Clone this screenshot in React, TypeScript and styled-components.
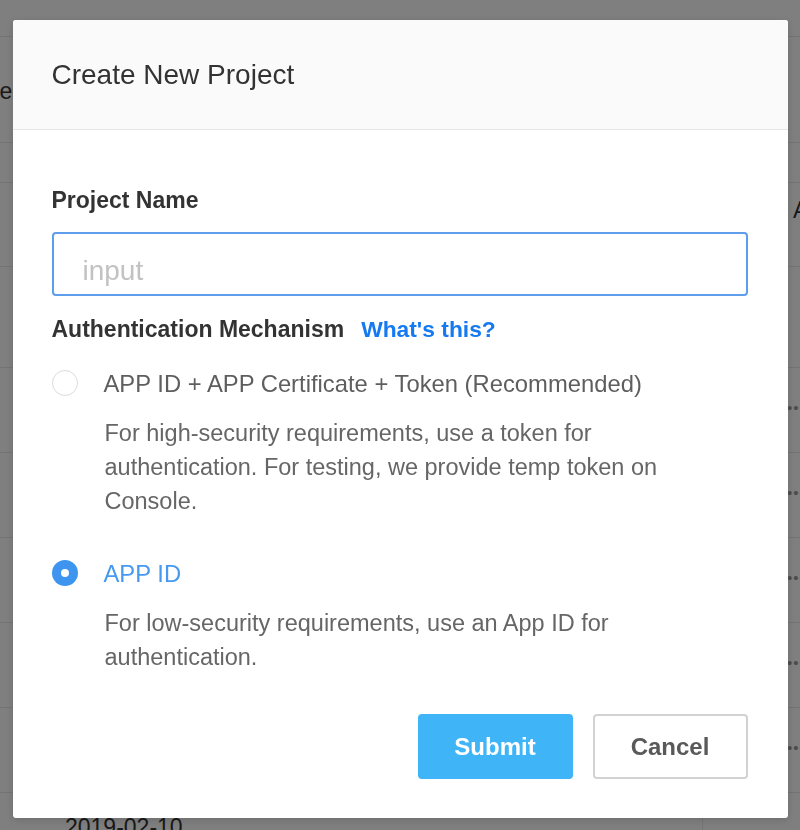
import { FC } from 'react';
import styled, { createGlobalStyle } from 'styled-components';

const GlobalStyle = createGlobalStyle`
  html, body {
    margin: 0;
    padding: 0;
  }
  body {
    font-family: 'Liberation Sans', Arial, Helvetica, sans-serif;
    color: #333;
  }
  * {
    box-sizing: border-box;
  }
`;

/* ---------- page behind the dialog ---------- */

const PageWrapper = styled.div`
  height: 830px;
  overflow: hidden;
  background: #fff;
`;

const TopBar = styled.div`
  height: 37px;
  border-bottom: 1px solid #e8e8e8;
`;

const FilterBar = styled.div`
  height: 106px;
  display: flex;
  align-items: center;
  border-bottom: 1px solid #e8e8e8;
  font-size: 23px;
  color: #333;
`;

const FilterText = styled.span`
  margin-left: -49px;
  padding-top: 4px;
`;

const SubBar = styled.div`
  height: 40px;
  border-bottom: 1px solid #e8e8e8;
`;

const TableHead = styled.div`
  height: 84px;
  display: flex;
  align-items: center;
  justify-content: flex-end;
  border-bottom: 1px solid #e8e8e8;
  font-size: 23px;
  color: #333;
`;

const HeadCell = styled.span`
  width: 7px;
  overflow: hidden;
  margin-top: -28px;
`;

const GapRow = styled.div`
  height: 101px;
  border-bottom: 1px solid #e8e8e8;
`;

const TableRow = styled.div`
  height: 85px;
  display: grid;
  grid-template-columns: 702px 1fr;
  border-bottom: 1px solid #e8e8e8;
  font-size: 23px;
  color: #333;
`;

const DateCell = styled.div`
  padding-left: 65px;
  padding-top: 21px;
`;

const ActionCell = styled.div`
  display: flex;
  align-items: center;
  padding-left: 84px;
  padding-bottom: 6px;
  border-left: 1px solid #e8e8e8;
  font-size: 15px;
  letter-spacing: 1px;
  color: #999;
`;

/* ---------- dialog ---------- */

const Overlay = styled.div`
  position: fixed;
  inset: 0;
  background: rgba(0, 0, 0, 0.5);
  display: flex;
  justify-content: center;
  align-items: flex-start;
  padding-top: 20px;
`;

const Modal = styled.div`
  width: 775px;
  background: #fff;
  border-radius: 3px;
  overflow: hidden;
  box-shadow: 0 2px 8px rgba(0, 0, 0, 0.15);
`;

const ModalHeader = styled.div`
  height: 110px;
  display: flex;
  align-items: center;
  padding: 0 39px;
  background: #fafafa;
  border-bottom: 1px solid #e6e6e6;
`;

const Title = styled.h2`
  margin: 0;
  font-size: 28px;
  font-weight: 400;
  color: #333;
`;

const ModalBody = styled.div`
  padding: 55px 40px 39px 39px;
`;

const FieldLabel = styled.div`
  font-size: 23px;
  line-height: 30px;
  font-weight: 700;
  color: #333;
`;

const TextInput = styled.input`
  display: block;
  width: 100%;
  height: 64px;
  margin-top: 17px;
  padding: 14px 29px 0;
  border: 2px solid #5d9deb;
  border-radius: 4px;
  outline: none;
  font-family: inherit;
  font-size: 28px;
  color: #333;
  &::placeholder {
    color: #c2c2c2;
  }
`;

const SectionRow = styled.div`
  display: flex;
  align-items: baseline;
  gap: 17px;
  margin-top: 18px;
`;

const HelpLink = styled.a`
  font-size: 22.8px;
  line-height: 30px;
  font-weight: 700;
  color: #157af2;
  text-decoration: none;
  cursor: pointer;
`;

const RadioOption = styled.div<{ $gap: number }>`
  margin-top: ${(p) => p.$gap}px;
`;

const RadioRow = styled.label`
  display: flex;
  align-items: center;
  gap: 26px;
  cursor: pointer;
`;

const RadioCircle = styled.span<{ $checked: boolean }>`
  flex: none;
  width: 26px;
  height: 26px;
  margin-top: -3px;
  border-radius: 50%;
  display: flex;
  align-items: center;
  justify-content: center;
  border: ${(p) => (p.$checked ? 'none' : '1.5px solid #dcdcdc')};
  background: ${(p) => (p.$checked ? '#3e95f0' : '#fff')};
  &::after {
    content: '';
    display: ${(p) => (p.$checked ? 'block' : 'none')};
    width: 8px;
    height: 8px;
    border-radius: 50%;
    background: #fff;
  }
`;

const OptionLabel = styled.span<{ $active: boolean }>`
  font-size: 23.8px;
  line-height: 30px;
  color: ${(p) => (p.$active ? '#4699f0' : '#5e5e5e')};
`;

const OptionDesc = styled.p`
  margin: 17px 0 0;
  padding-left: 53px;
  font-size: 23.5px;
  line-height: 34px;
  color: #666;
`;

const Footer = styled.div`
  display: flex;
  justify-content: flex-end;
  gap: 20px;
  margin-top: 40px;
`;

const Button = styled.button<{ $primary?: boolean }>`
  width: 155px;
  height: 65px;
  border-radius: 4px;
  font-family: inherit;
  font-size: 24px;
  font-weight: 700;
  cursor: pointer;
  border: ${(p) => (p.$primary ? 'none' : '2px solid #d2d2d2')};
  background: ${(p) => (p.$primary ? '#3fb5f7' : '#fff')};
  color: ${(p) => (p.$primary ? '#fff' : '#595959')};
`;

type Option = {
  id: string;
  label: string;
  desc: string;
  gap: number;
};

const options: Option[] = [
  {
    id: 'token',
    label: 'APP ID + APP Certificate + Token (Recommended)',
    desc: 'For high-security requirements, use a token for authentication. For testing, we provide temp token on Console.',
    gap: 25,
  },
  {
    id: 'appid',
    label: 'APP ID',
    desc: 'For low-security requirements, use an App ID for authentication.',
    gap: 41,
  },
];

// only the last row's date peeks out below the dialog
const rows = ['', '', '', '', '', '2019-02-10'];

const BackgroundPage: FC = () => (
  <PageWrapper>
    <TopBar />
    <FilterBar>
      <FilterText>Name</FilterText>
    </FilterBar>
    <SubBar />
    <TableHead>
      <HeadCell>A</HeadCell>
    </TableHead>
    <GapRow />
    {rows.map((d, i) => (
      <TableRow key={i}>
        <DateCell>{d}</DateCell>
        <ActionCell>•••</ActionCell>
      </TableRow>
    ))}
  </PageWrapper>
);

const App: FC = () => {
  const selected = 'appid';

  return (
    <>
      <GlobalStyle />
      <BackgroundPage />
      <Overlay>
        <Modal>
          <ModalHeader>
            <Title>Create New Project</Title>
          </ModalHeader>
          <ModalBody>
            <FieldLabel>Project Name</FieldLabel>
            <TextInput placeholder='input' />
            <SectionRow>
              <FieldLabel>Authentication Mechanism</FieldLabel>
              <HelpLink>What's this?</HelpLink>
            </SectionRow>
            {options.map((opt) => (
              <RadioOption key={opt.id} $gap={opt.gap}>
                <RadioRow>
                  <RadioCircle $checked={opt.id === selected} />
                  <OptionLabel $active={opt.id === selected}>{opt.label}</OptionLabel>
                </RadioRow>
                <OptionDesc>{opt.desc}</OptionDesc>
              </RadioOption>
            ))}
            <Footer>
              <Button $primary>Submit</Button>
              <Button>Cancel</Button>
            </Footer>
          </ModalBody>
        </Modal>
      </Overlay>
    </>
  );
};

export default App;
